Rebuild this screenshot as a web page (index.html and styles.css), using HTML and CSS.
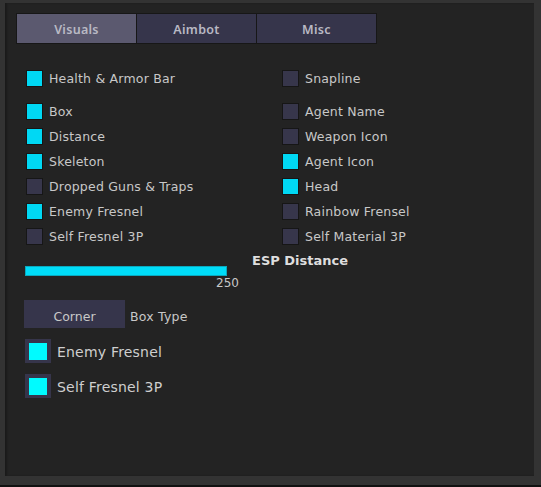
FILE: index.html
```html
<!DOCTYPE html>
<html>
<head>
<meta charset="utf-8">
<link rel="stylesheet" href="styles.css">
</head>
<body>
<div class="frame">
  <div class="panel">
    <div class="tabs">
      <div class="tab active">Visuals</div>
      <div class="tab">Aimbot</div>
      <div class="tab">Misc</div>
    </div>
    <div class="grid">
      <div class="col">
        <div class="row first"><span class="cb on"></span><span class="lbl">Health &amp; Armor Bar</span></div>
        <div class="row"><span class="cb on"></span><span class="lbl">Box</span></div>
        <div class="row"><span class="cb on"></span><span class="lbl">Distance</span></div>
        <div class="row"><span class="cb on"></span><span class="lbl">Skeleton</span></div>
        <div class="row"><span class="cb"></span><span class="lbl">Dropped Guns &amp; Traps</span></div>
        <div class="row"><span class="cb on"></span><span class="lbl">Enemy Fresnel</span></div>
        <div class="row"><span class="cb"></span><span class="lbl">Self Fresnel 3P</span></div>
      </div>
      <div class="col">
        <div class="row first"><span class="cb"></span><span class="lbl">Snapline</span></div>
        <div class="row"><span class="cb"></span><span class="lbl">Agent Name</span></div>
        <div class="row"><span class="cb"></span><span class="lbl">Weapon Icon</span></div>
        <div class="row"><span class="cb on"></span><span class="lbl">Agent Icon</span></div>
        <div class="row"><span class="cb on"></span><span class="lbl">Head</span></div>
        <div class="row"><span class="cb"></span><span class="lbl">Rainbow Frensel</span></div>
        <div class="row"><span class="cb"></span><span class="lbl">Self Material 3P</span></div>
      </div>
    </div>
    <div class="slider-row">
      <div class="slider">
        <div class="bar"></div>
        <div class="val">250</div>
      </div>
      <div class="slider-label">ESP Distance</div>
    </div>
    <div class="combo-row">
      <div class="combo">Corner</div>
      <div class="lbl">Box Type</div>
    </div>
    <div class="big-row"><span class="bigcb"><span class="fill"></span></span><span class="biglbl">Enemy Fresnel</span></div>
    <div class="big-row"><span class="bigcb"><span class="fill"></span></span><span class="biglbl">Self Fresnel 3P</span></div>
  </div>
</div>
</body>
</html>
```
FILE: styles.css
```css
html, body {
  margin: 0;
  padding: 0;
}
body {
  width: 541px;
  height: 487px;
  background: #111;
  font-family: "DejaVu Sans", "Noto Sans", sans-serif;
  color: #c9c9c9;
  overflow: hidden;
}
.frame {
  height: 485px;
  background: #333333;
  padding: 3px 7px 0 5px;
  box-sizing: border-box;
}
.panel {
  height: 473px;
  background: #232323;
  padding: 10px 0 0 11px;
  box-sizing: border-box;
  box-shadow: inset 2px 0 2px rgba(0,0,0,0.25);
}
.tabs {
  display: flex;
  width: 361px;
  height: 31px;
  border: 1px solid #171717;
  box-sizing: border-box;
  background: #171717;
  gap: 1px;
}
.tab {
  flex: 1;
  background: #36354b;
  color: #b9b9c4;
  font-family: "Noto Sans", "DejaVu Sans", sans-serif;
  font-size: 12.5px;
  font-weight: 600;
  letter-spacing: 0.3px;
  display: flex;
  align-items: center;
  justify-content: center;
  padding-top: 2px;
}
.tab.active {
  background: #5b596f;
}
.grid {
  display: grid;
  grid-template-columns: 256px 240px;
  margin-top: 22px;
  margin-left: 10px;
}
.col {
  display: flex;
  flex-direction: column;
}
.row {
  height: 25px;
  display: flex;
  align-items: center;
}
.row.first {
  margin-bottom: 8px;
}
.cb {
  width: 17px;
  height: 17px;
  box-sizing: border-box;
  border: 1px solid #161616;
  background: #37364b;
  margin-right: 6px;
  flex: none;
}
.cb.on {
  background: #00d8f4;
}
.lbl {
  font-size: 12.5px;
  color: #c8c8c8;
  letter-spacing: 0.2px;
}
.slider-row {
  display: flex;
  align-items: flex-start;
  margin-top: 4px;
  margin-left: 9px;
}
.slider {
  width: 214px;
  margin-top: 13px;
}
.bar {
  width: 202px;
  height: 10px;
  box-sizing: border-box;
  background: #00dcf8;
  border: 1px solid #0aa9bf;
}
.val {
  text-align: right;
  font-size: 12px;
  line-height: 14px;
  color: #c8c8c8;
}
.slider-label {
  margin-left: 13px;
  font-size: 13px;
  font-weight: bold;
  line-height: 16px;
  color: #dedede;
}
.combo-row {
  display: flex;
  align-items: center;
  margin-top: 10px;
  margin-left: 8px;
}
.combo-row .lbl {
  padding-top: 5px;
}
.combo {
  width: 101px;
  height: 28px;
  background: #36354b;
  display: flex;
  align-items: center;
  justify-content: center;
  font-size: 12.5px;
  color: #c8c8c8;
  margin-right: 5px;
  padding-top: 4px;
  box-sizing: border-box;
}
.big-row {
  display: flex;
  align-items: center;
  height: 24px;
  margin-left: 9px;
  margin-top: 11px;
}
.big-row + .big-row {
  margin-top: 11px;
}
.bigcb {
  width: 26px;
  height: 24px;
  box-sizing: border-box;
  background: #36354b;
  display: flex;
  align-items: center;
  justify-content: center;
  margin-right: 6px;
}
.fill {
  width: 18px;
  height: 17px;
  background: #00fbff;
}
.biglbl {
  font-size: 14px;
  color: #cfcfcf;
  letter-spacing: 0.2px;
  padding-top: 2px;
}
```
